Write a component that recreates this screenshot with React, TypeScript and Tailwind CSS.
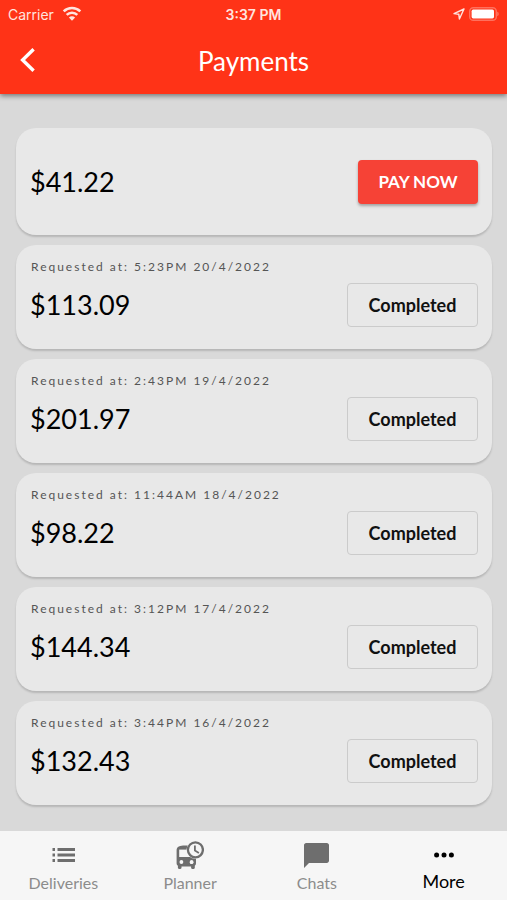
type Payment = {
  amount: string;
  requestedAt: string;
};

const payments: Payment[] = [
  { amount: "$113.09", requestedAt: "5:23PM 20/4/2022" },
  { amount: "$201.97", requestedAt: "2:43PM 19/4/2022" },
  { amount: "$98.22", requestedAt: "11:44AM 18/4/2022" },
  { amount: "$144.34", requestedAt: "3:12PM 17/4/2022" },
  { amount: "$132.43", requestedAt: "3:44PM 16/4/2022" },
];

const WifiIcon = () => (
  <svg width="20" height="16" viewBox="0 0 20 16" fill="none" stroke="currentColor" strokeWidth="2.6" aria-hidden="true">
    <path d="M1.7 5.4a12 12 0 0 1 16.6 0" />
    <path d="M4.7 8.9a7.6 7.6 0 0 1 10.6 0" />
    <path d="M10 14.8 6.9 11.5a4.4 4.4 0 0 1 6.2 0z" fill="currentColor" stroke="none" />
  </svg>
);

const LocationIcon = () => (
  <svg width="12" height="12" viewBox="0 0 12 12" fill="none" stroke="currentColor" strokeWidth="1.4" strokeLinejoin="round" aria-hidden="true">
    <path d="M11 1 1 5.6l4.8.6.6 4.8z" />
  </svg>
);

const BatteryIcon = () => (
  <svg width="30" height="14" viewBox="0 0 30 14" aria-hidden="true">
    <rect x="0.7" y="0.7" width="26.6" height="12.6" rx="3.6" fill="none" stroke="#fff" strokeOpacity="0.3" strokeWidth="1.4" />
    <rect x="2.6" y="2.6" width="22.4" height="8.8" rx="1.6" fill="#fff" />
    <path d="M28.4 4.8c1.6.6 1.6 3.8 0 4.4z" fill="#fff" fillOpacity="0.4" />
  </svg>
);

const BackIcon = () => (
  <svg width="16" height="26" viewBox="0 0 16 26" fill="none" stroke="currentColor" strokeWidth="3.4" aria-hidden="true">
    <path d="M13.6 1.2 2.6 12l11 10.8" />
  </svg>
);

const ListIcon = () => (
  <svg width="24" height="14" viewBox="0 0 24 14" fill="currentColor" aria-hidden="true">
    <path d="M1.5 0H4v3H1.500zM6.500 0H24v3H6.500zM1.500 5.500H4v3H1.500zM6.500 5.500H24v3H6.500zM1.500 11H4v3H1.500zM6.500 11H24v3H6.500z" />
  </svg>
);

const BusClockIcon = () => (
  <svg width="28" height="28" viewBox="0 0 28 28" aria-hidden="true">
    <path
      fill="currentColor"
      d="M.6 9.4C.6 5.6 4 4.6 9 4.6h11v17.6c0 1-.4 1.9-1.2 2.5v2.1c0 .7-.5 1.2-1.2 1.2h-1.3c-.7 0-1.2-.5-1.2-1.2v-1.400H5.500v1.400c0 .7-.5 1.200-1.200 1.200H3.100c-.7 0-1.200-.5-1.200-1.200v-2.100c-.8-.6-1.300-1.500-1.300-2.500z"
    />
    <path fill="#f6f6f6" d="M3.2 8.6H15v7.4H3.200z" />
    <circle cx="5.4" cy="21" r="1.9" fill="#f6f6f6" />
    <circle cx="15.6" cy="21" r="1.9" fill="#f6f6f6" />
    <circle cx="19.4" cy="8.8" r="9" fill="#f6f6f6" />
    <path fill="currentColor" d="M12.6 16c2 1.600 4.400 2.300 7.400 2.200v2.800h-7.400z" />
    <circle cx="15.6" cy="21" r="1.9" fill="#f6f6f6" />
    <circle cx="19.4" cy="8.8" r="7.5" fill="#f6f6f6" stroke="currentColor" strokeWidth="2.3" />
    <path d="M18.9 4.4v5.200l4 2.400" fill="none" stroke="currentColor" strokeWidth="1.8" />
  </svg>
);

const ChatIcon = () => (
  <svg width="25" height="25" viewBox="0 0 25 25" fill="currentColor" aria-hidden="true">
    <path d="M2.2 0h20.6C24 0 25 1 25 2.200v15.600c0 1.200-1 2.200-2.200 2.200H5L0 25V2.200C0 1 1 0 2.200 0z" />
  </svg>
);

const DotsIcon = () => (
  <svg width="20" height="6" viewBox="0 0 20 6" fill="currentColor" aria-hidden="true">
    <circle cx="2.6" cy="3" r="2.5" />
    <circle cx="10" cy="3" r="2.5" />
    <circle cx="17.4" cy="3" r="2.5" />
  </svg>
);

const tabs = [
  { label: "Deliveries", icon: <ListIcon />, active: false },
  { label: "Planner", icon: <BusClockIcon />, active: false },
  { label: "Chats", icon: <ChatIcon />, active: false },
  { label: "More", icon: <DotsIcon />, active: true },
];

const PaymentCard = ({ payment }: { payment: Payment }) => {
  return (
    <li className="flex h-[104px] items-center justify-between rounded-[20px] bg-[#e8e8e8] px-[14px] shadow-[0_2px_2px_rgba(0,0,0,0.16)]">
      <div className="flex h-full flex-col pt-3">
        <p className="pl-px text-[12px] leading-5 tracking-[2px] text-[#555]">Requested at: {payment.requestedAt}</p>
        <p className="mt-2 text-[27px] leading-10 text-black">{payment.amount}</p>
      </div>
      <div className="mt-4 flex h-11 w-[131px] items-center justify-center rounded-[4px] border border-[#cbcbcb] text-[18px] font-bold text-[#111]">
        Completed
      </div>
    </li>
  );
};

export default function App() {
  return (
    <div className="flex min-h-screen flex-col bg-[#d9d9d9] font-['Lato','Liberation_Sans',sans-serif]">
      <header className="z-10 bg-[#ff3317] text-white shadow-[0_2px_5px_rgba(0,0,0,0.45)]">
        <div className="grid h-7 grid-cols-3 items-center px-2 font-['Inter','Liberation_Sans',sans-serif] text-[14px] text-[#ffe4df]">
          <div className="flex items-center gap-2">
            <span>Carrier</span>
            <WifiIcon />
          </div>
          <span className="text-center font-semibold">3:37 PM</span>
          <div className="flex items-center justify-end gap-1">
            <LocationIcon />
            <BatteryIcon />
          </div>
        </div>
        <div className="grid h-[66px] grid-cols-[1fr_auto_1fr] items-center px-5">
          <button type="button" aria-label="Back" className="justify-self-start">
            <BackIcon />
          </button>
          <h1 className="text-[26px] leading-8">Payments</h1>
        </div>
      </header>

      <main className="grow pt-[34px] pr-[15px] pb-[26px] pl-4">
        <ul className="flex flex-col gap-[10px]">
          <li className="flex h-[107px] items-center justify-between rounded-[20px] bg-[#e8e8e8] px-[14px] shadow-[0_2px_2px_rgba(0,0,0,0.16)]">
            <p className="text-[27px] leading-10 text-black">$41.22</p>
            <button
              type="button"
              className="h-11 w-[120px] rounded-[4px] bg-[#f64236] text-[17px] font-bold text-white shadow-[0_2px_3px_rgba(0,0,0,0.3)]"
            >
              PAY NOW
            </button>
          </li>
          {payments.map((payment) => (
            <PaymentCard key={payment.requestedAt} payment={payment} />
          ))}
        </ul>
      </main>

      <nav className="grid h-[69px] grid-cols-4 bg-[#f6f6f6]">
        {tabs.map((tab) => (
          <a
            key={tab.label}
            href="#"
            className={tab.active ? "flex flex-col items-center pt-1 text-black" : "flex flex-col items-center pt-1 text-[#6e6e6e]"}
          >
            <span className="flex h-10 items-center justify-center">{tab.icon}</span>
            <span className={tab.active ? "text-[18px] leading-3" : "text-[16px] leading-4 text-[#8c8c8c]"}>
              {tab.label}
            </span>
          </a>
        ))}
      </nav>
    </div>
  );
}
